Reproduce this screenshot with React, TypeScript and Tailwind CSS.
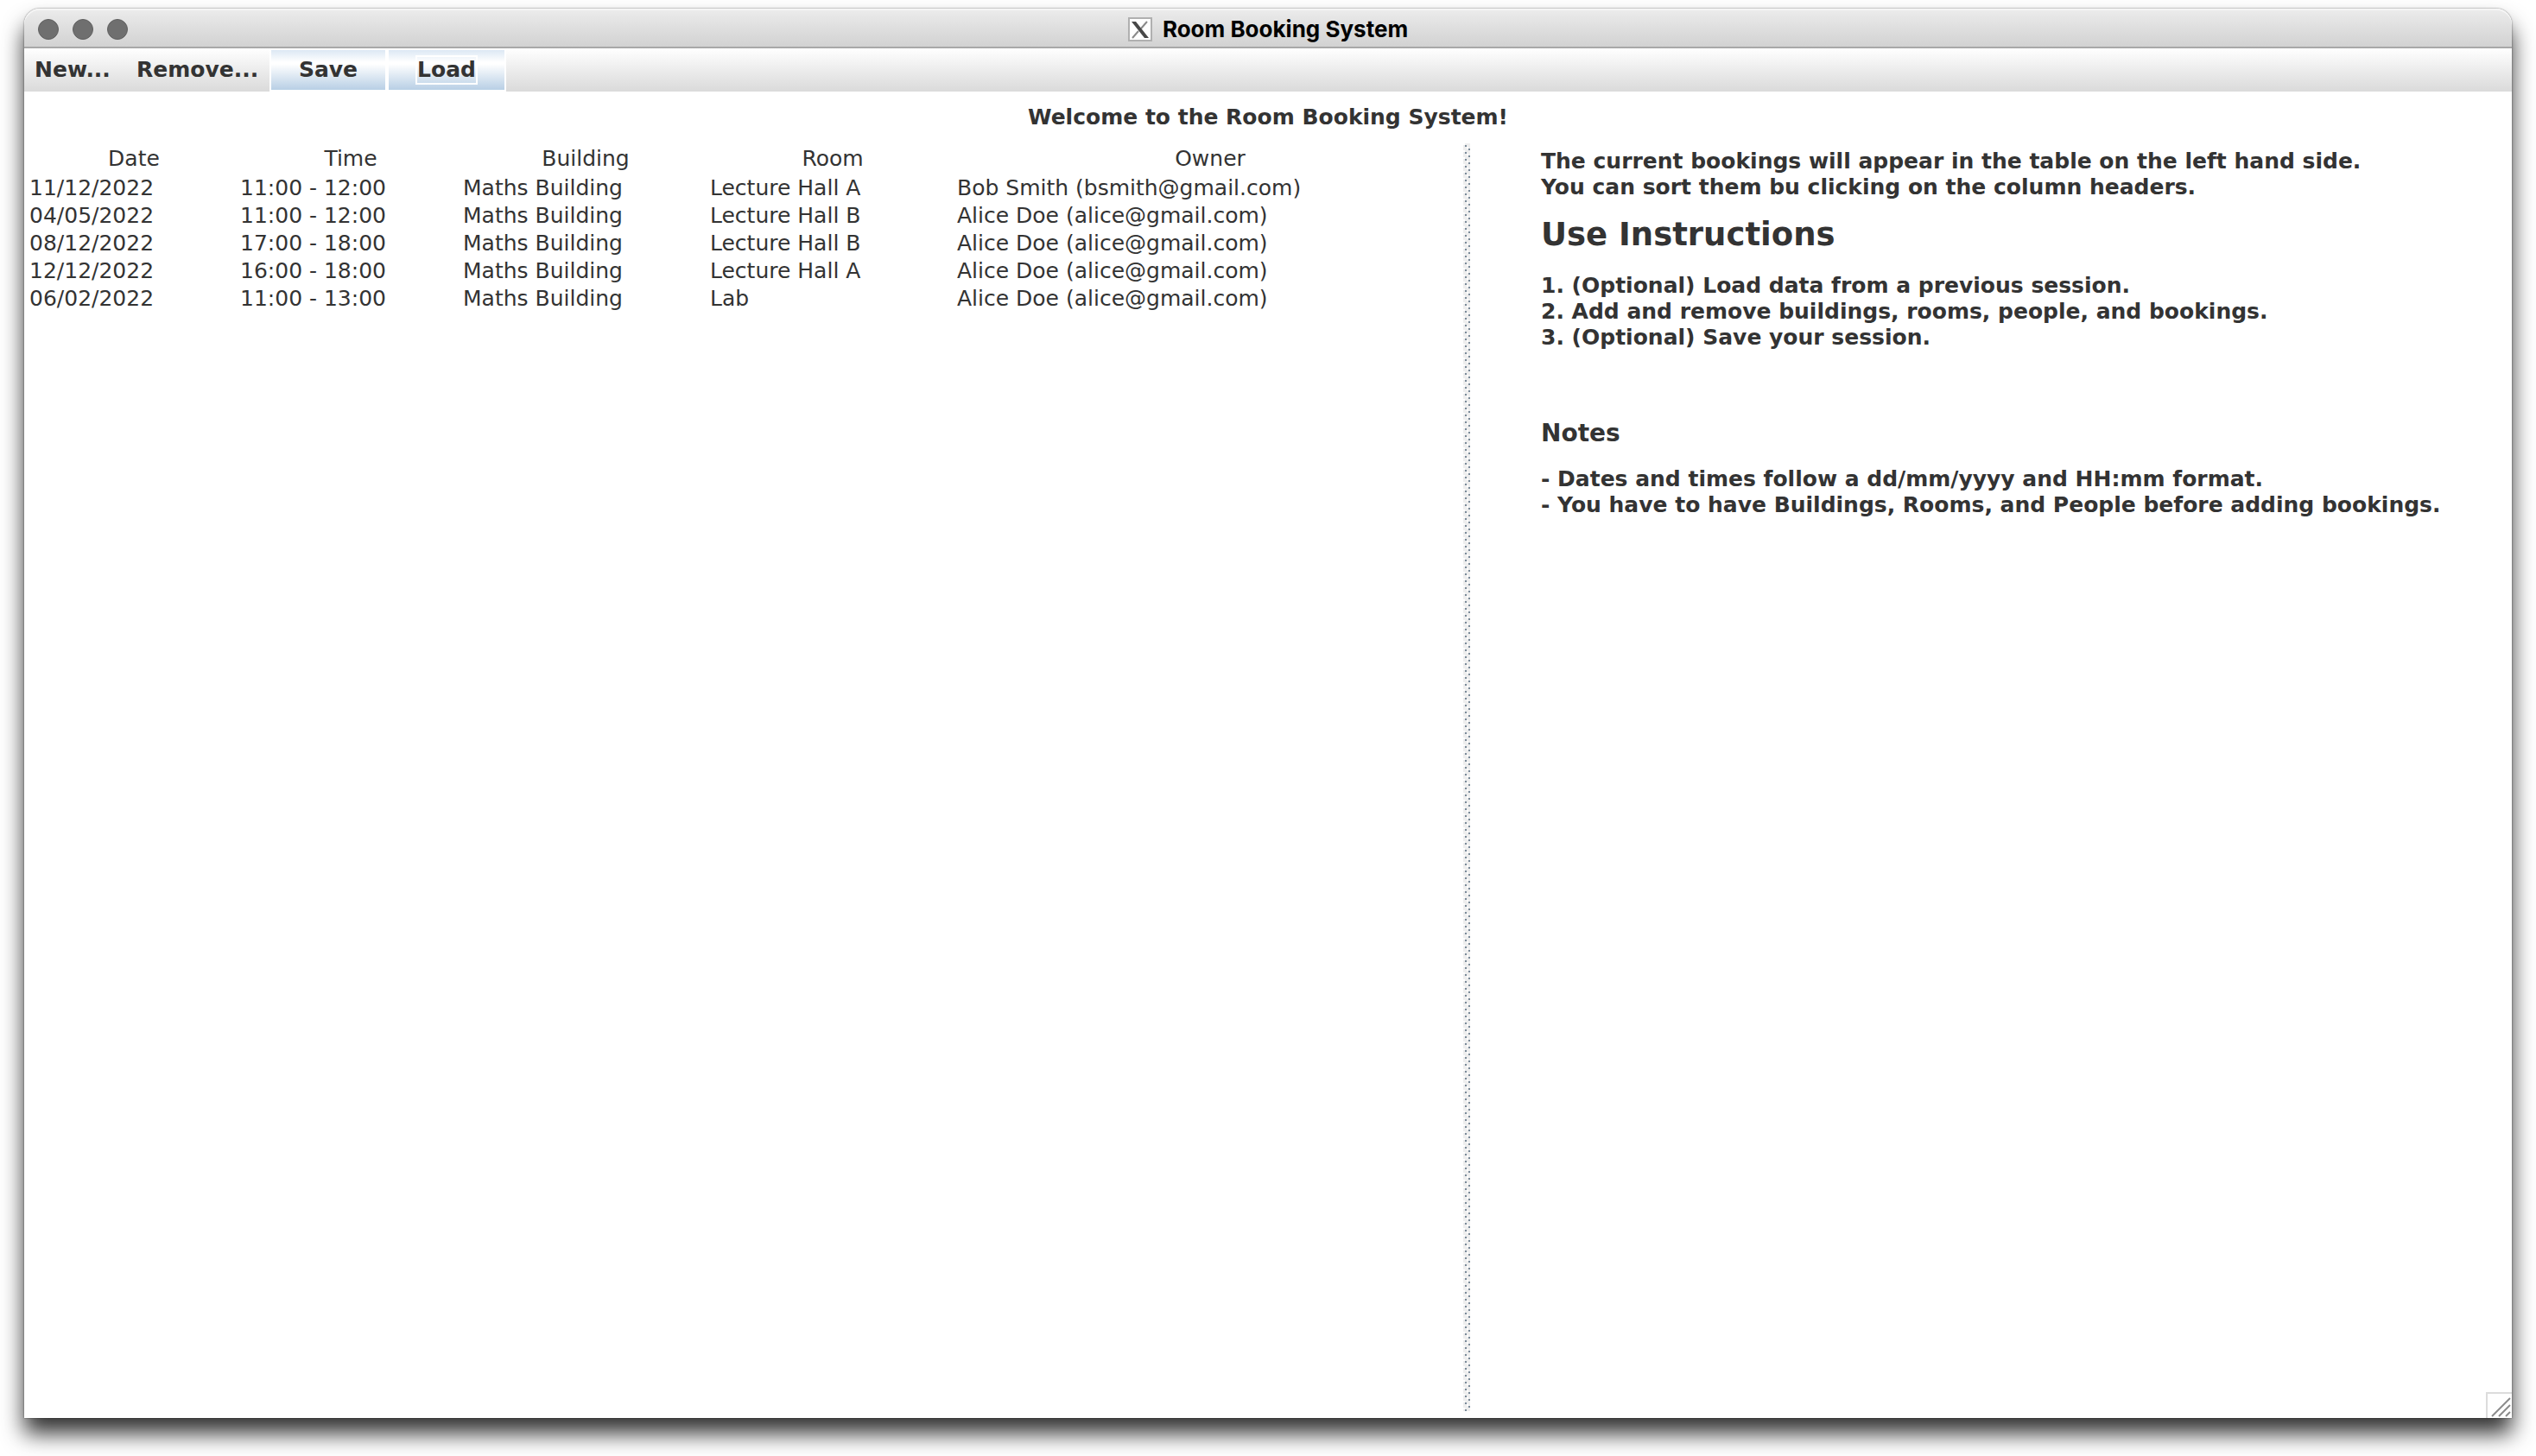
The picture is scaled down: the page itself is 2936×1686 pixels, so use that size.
import React from "react";

const columns = ["Date", "Time", "Building", "Room", "Owner"];
const bookings = [
  ["11/12/2022", "11:00 - 12:00", "Maths Building", "Lecture Hall A", "Bob Smith (bsmith@gmail.com)"],
  ["04/05/2022", "11:00 - 12:00", "Maths Building", "Lecture Hall B", "Alice Doe (alice@gmail.com)"],
  ["08/12/2022", "17:00 - 18:00", "Maths Building", "Lecture Hall B", "Alice Doe (alice@gmail.com)"],
  ["12/12/2022", "16:00 - 18:00", "Maths Building", "Lecture Hall A", "Alice Doe (alice@gmail.com)"],
  ["06/02/2022", "11:00 - 13:00", "Maths Building", "Lab", "Alice Doe (alice@gmail.com)"],
];

function TitleBar() {
  return (
    <header className="relative flex h-[46px] items-center justify-center gap-3 rounded-t-[18px] border-b-2 border-[#a8a8a8] bg-gradient-to-b from-[#ececec] to-[#d2d2d2] pt-1 shadow-[inset_0_2px_0_#f5f5f5]">
      <div className="absolute left-4 top-3 flex gap-4">
        <button aria-label="Close" className="size-6 rounded-full border border-[#606060] bg-[#6f6f6f]" />
        <button aria-label="Minimize" className="size-6 rounded-full border border-[#606060] bg-[#6f6f6f]" />
        <button aria-label="Zoom" className="size-6 rounded-full border border-[#606060] bg-[#6f6f6f]" />
      </div>
      <svg className="size-7" viewBox="0 0 28 28" aria-hidden="true">
        <rect x="1" y="1" width="26" height="26" fill="#fff" stroke="#b0b0b0" strokeWidth="2" />
        <path d="M22 5L15 13M12 16L5 24" stroke="#8a8a8a" strokeWidth="2" />
        <path d="M4 5h5l15 19h-5z" fill="#484848" />
      </svg>
      <h1 className="font-[Inter,sans-serif] text-[26px] font-bold leading-8 text-black">Room Booking System</h1>
    </header>
  );
}

function MenuBar() {
  return (
    <nav className="flex h-[50px] bg-gradient-to-b from-white to-[#dadada] font-bold">
      <button className="w-[118px] pl-3 text-left">New...</button>
      <button className="w-[166px] pl-3 text-left">Remove...</button>
      <button className="w-[136px] border-2 border-white bg-[linear-gradient(#dce8f4,#fff_30%,#fff_35%,#b8cfe5)]">Save</button>
      <button className="flex w-[138px] items-center justify-center border-2 border-white bg-[linear-gradient(#dce8f4,#fff_30%,#fff_35%,#b8cfe5)]">
        <span className="border-2 border-white leading-[30px]">Load</span>
      </button>
    </nav>
  );
}

function BookingTable() {
  return (
    <table className="w-full table-fixed border-collapse text-left leading-8">
      <colgroup>
        <col className="w-[244px]" />
        <col className="w-[258px]" />
        <col className="w-[286px]" />
        <col className="w-[286px]" />
        <col />
      </colgroup>
      <thead>
        <tr>
          {columns.map((c) => (
            <th key={c} className="h-9 py-0 pl-0.5 pr-0 text-center font-normal">{c}</th>
          ))}
        </tr>
      </thead>
      <tbody>
        {bookings.map((row) => (
          <tr key={row[0]}>
            {row.map((cell, i) => (
              <td key={i} className="px-0.5 py-0">{cell}</td>
            ))}
          </tr>
        ))}
      </tbody>
    </table>
  );
}

function Divider() {
  return (
    <div
      role="separator"
      aria-orientation="vertical"
      className="w-2 shrink-0 bg-[#eee] bg-[conic-gradient(from_270deg_at_2px_2px,#7a8a99_25%,transparent_0),conic-gradient(from_270deg_at_2px_2px,#7a8a99_25%,transparent_0),conic-gradient(from_270deg_at_2px_2px,#fff_25%,transparent_0),conic-gradient(from_270deg_at_2px_2px,#fff_25%,transparent_0)] [background-position:2px_2px,6px_6px,0_0,4px_4px] [background-size:8px_8px]"
    />
  );
}

function Instructions() {
  return (
    <div className="pl-[82px] pt-1.5 font-bold">
      <p>The current bookings will appear in the table on the left hand side.</p>
      <p>You can sort them bu clicking on the column headers.</p>
      <h2 className="pb-6 pt-5 text-[37px] leading-10">Use Instructions</h2>
      <p>1. (Optional) Load data from a previous session.</p>
      <p>2. Add and remove buildings, rooms, people, and bookings.</p>
      <p>3. (Optional) Save your session.</p>
      <h3 className="pb-[22px] pt-20 text-[28px] leading-8">Notes</h3>
      <p>- Dates and times follow a dd/mm/yyyy and HH:mm format.</p>
      <p>- You have to have Buildings, Rooms, and People before adding bookings.</p>
    </div>
  );
}

export default function App() {
  return (
    <div className="flex h-screen flex-col bg-white px-7 pb-11 pt-2.5 font-['DejaVu_Sans',sans-serif] text-[25px] leading-[30px] text-[#333]">
      <div className="relative flex flex-1 flex-col rounded-t-[18px] bg-white shadow-[0_0_2px_rgba(0,0,0,0.6),0_18px_26px_rgba(0,0,0,0.8)]">
        <TitleBar />
        <MenuBar />
        <h2 className="py-[15px] text-center font-bold">Welcome to the Room Booking System!</h2>
        <main className="flex flex-1 pb-2">
          <section className="min-w-0 flex-[1666]">
            <div className="pl-1">
              <BookingTable />
            </div>
          </section>
          <Divider />
          <section className="min-w-0 flex-[1206]">
            <Instructions />
          </section>
        </main>
        <svg className="absolute bottom-0 right-0 size-[30px]" viewBox="0 0 30 30" aria-hidden="true">
          <path d="M1 30V1H30" fill="none" stroke="#dcdcdc" strokeWidth="2" />
          <path d="M7 28L28 7M15 28L28 15M23 28L28 23" stroke="#8c8c8c" strokeWidth="2" />
        </svg>
      </div>
    </div>
  );
}
